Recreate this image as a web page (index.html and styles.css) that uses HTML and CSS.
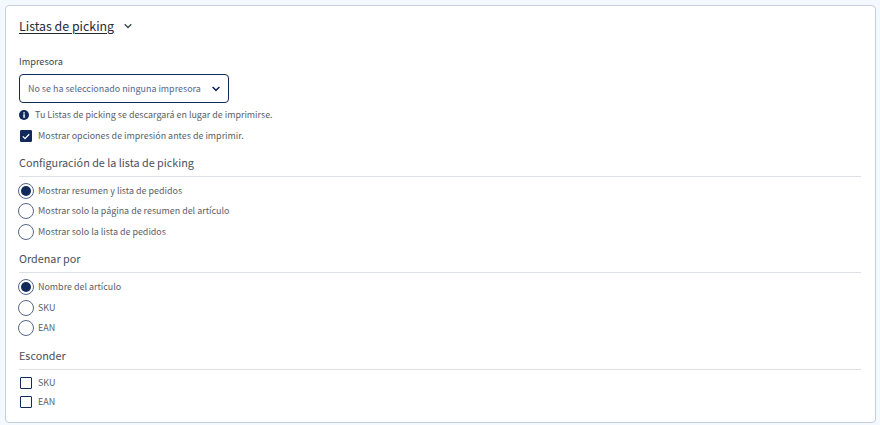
FILE: index.html
```html
<!DOCTYPE html>
<html lang="es">
<head>
<meta charset="utf-8">
<title>Listas de picking</title>
<link rel="stylesheet" href="styles.css">
</head>
<body>
<section class="card">
  <header class="head">
    <h2 class="title">Listas de picking</h2>
    <svg width="8" height="6" viewBox="0 0 8 6"><path d="M.7 1.2 4 4.5 7.3 1.2" fill="none" stroke="#3a4250" stroke-width="1.3"/></svg>
  </header>
  <div class="label">Impresora</div>
  <div class="select">
    <span>No se ha seleccionado ninguna impresora</span>
    <svg width="8" height="6" viewBox="0 0 8 6"><path d="M.6 1 4 4.4 7.4 1" fill="none" stroke="#12295c" stroke-width="1.5"/></svg>
  </div>
  <div class="info">
    <svg width="10" height="10" viewBox="0 0 10 10"><circle cx="5" cy="5" r="5" fill="#12295c"/><rect x="4.3" y="4.2" width="1.5" height="3.6" fill="#fff"/><rect x="4.3" y="2.2" width="1.5" height="1.4" fill="#fff"/></svg>
    <span>Tu Listas de picking se descargará en lugar de imprimirse.</span>
  </div>
  <div class="check first">
    <span class="box on"><svg width="8" height="7" viewBox="0 0 8 7"><path d="M.8 3.4 3 5.6 7.2 1.2" fill="none" stroke="#fff" stroke-width="1.3"/></svg></span>
    <span>Mostrar opciones de impresión antes de imprimir.</span>
  </div>

  <h3 class="sec sec-a">Configuración de la lista de picking</h3>
  <div class="radios">
    <div class="radio"><span class="dot on"></span><span>Mostrar resumen y lista de pedidos</span></div>
    <div class="radio"><span class="dot"></span><span>Mostrar solo la página de resumen del artículo</span></div>
    <div class="radio"><span class="dot"></span><span>Mostrar solo la lista de pedidos</span></div>
  </div>

  <h3 class="sec">Ordenar por</h3>
  <div class="radios">
    <div class="radio"><span class="dot on"></span><span>Nombre del artículo</span></div>
    <div class="radio"><span class="dot"></span><span>SKU</span></div>
    <div class="radio"><span class="dot"></span><span>EAN</span></div>
  </div>

  <h3 class="sec">Esconder</h3>
  <div class="checks">
    <div class="check"><span class="box"></span><span>SKU</span></div>
    <div class="check"><span class="box"></span><span>EAN</span></div>
  </div>
</section>
</body>
</html>
```
FILE: styles.css
```css
* { box-sizing: border-box; }
html, body { height: 100%; }
body {
  margin: 0;
  padding: 5px 4px 2px 5px;
  background: #f4f8ff;
  font-family: "Noto Sans CJK JP", "Lato", sans-serif;
  color: #5a606b;
  font-size: 8.94px;
  line-height: 14px;
  overflow: hidden;
}
.card {
  height: 418px;
  background: #fff;
  border: 1px solid #c6cfdd;
  border-radius: 4px;
  padding: 0 14px 0 13px;
}
.head { display: flex; align-items: center; height: 40px; gap: 10px; }
.title {
  margin: 0;
  font-size: 12.4px;
  line-height: 20px;
  font-weight: 400;
  color: #252b35;
  text-decoration: underline;
  text-underline-offset: 2px;
}
.label { margin-top: 9px; height: 13px; line-height: 13px; font-size: 9.2px; color: #3c424d; }
.select {
  margin-top: 6px;
  width: 210px;
  height: 29px;
  border: 1px solid #12295c;
  border-radius: 4px;
  display: flex;
  align-items: center;
  justify-content: space-between;
  padding: 0 8px;
  color: #56678c;
}
.info { display: flex; align-items: center; gap: 6px; margin-top: 5px; height: 14px; }
.check { display: flex; align-items: center; gap: 6px; height: 18px; padding-left: 1px; }
.check.first { margin-top: 5px; }
.box {
  width: 12px; height: 12px;
  border: 1px solid #12295c;
  border-radius: 1px;
  display: flex; align-items: center; justify-content: center;
  background: #fff;
}
.box.on { background: #12295c; }
.sec {
  margin: 0;
  font-size: 10.8px;
  font-weight: 400;
  color: #4a505b;
  height: 25px;
  line-height: 21px;
  border-bottom: 1px solid #dcdfe3;
  margin-top: 3px;
}
.sec-a { margin-top: 6.6px; }
.radios { padding-top: 4px; margin-bottom: 6px; }
.radio { display: flex; align-items: center; gap: 4px; height: 20.5px; }
.dot {
  margin-left: -1px;
  width: 16px; height: 16px;
  border: 1px solid #56678c;
  border-radius: 50%;
  display: flex; align-items: center; justify-content: center;
}
.dot.on::before {
  content: "";
  width: 10px; height: 10px;
  border-radius: 50%;
  background: #12295c;
}
.checks { padding-top: 4px; }
.checks .check { height: 19px; }
```
